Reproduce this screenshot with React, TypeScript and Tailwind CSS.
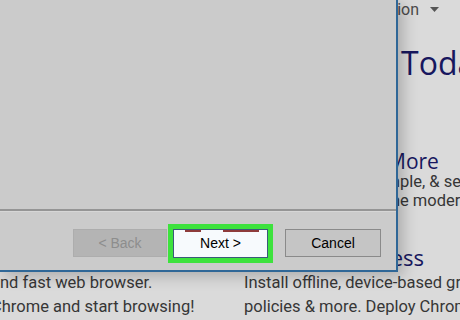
import React from "react";

export default function App() {
  const page = { fontFamily: "Roboto, 'Liberation Sans', sans-serif" };
  const head = { fontFamily: "'Open Sans', 'Liberation Sans', sans-serif" };
  const dlg = { fontFamily: "'Liberation Sans', Arial, sans-serif" };
  return (
    <div className="relative w-[460px] h-[320px] overflow-hidden bg-[#dadada]">
      {/* web page behind the dialog */}
      <div className="absolute inset-0 flex flex-col text-[#363636]" style={page}>
        <div className="flex items-center h-[20px] text-[16px] text-[#4a4a4a]">
          <div className="shrink-0 w-[419px] flex justify-end whitespace-nowrap">Documentation</div>
          <svg className="shrink-0 ml-[11px]" width="9" height="6" viewBox="0 0 9 6">
            <path d="M0 0 L9 0 L4.5 5 Z" fill="#555" />
          </svg>
        </div>
        <div
          className="mt-[27px] h-[32px] leading-[32px] text-[32px] text-[#17175e] pl-[401px] whitespace-nowrap"
          style={head}
        >
          Today
        </div>
        <div
          className="mt-[72px] h-[21px] leading-[21px] text-[21px] text-[#17175e] pl-[387px] whitespace-nowrap"
          style={head}
        >
          More
        </div>
        <div className="text-[16.5px] leading-[19px] whitespace-nowrap">
          <div className="flex">
            <div className="shrink-0 w-[400px] flex justify-end">Fast, sim</div>
            <div className="shrink-0">ple, &amp; secure</div>
          </div>
          <div className="flex">
            <div className="shrink-0 w-[400px] flex justify-end">for th</div>
            <div className="shrink-0">e modern enterprise</div>
          </div>
        </div>
        <div
          className="mt-[36px] h-[22px] leading-[22px] text-[22px] text-[#17175e] whitespace-nowrap flex"
          style={head}
        >
          <div className="shrink-0 w-[424px] flex justify-end">Access</div>
        </div>
        <div className="mt-[3px] flex text-[16.5px] leading-[24px] whitespace-nowrap">
          <div className="shrink-0 w-[244px] -ml-[9px]">
            <div>and fast web browser.</div>
            <div>Chrome and start browsing!</div>
          </div>
          <div className="shrink-0 ml-[9px]">
            <div>Install offline, device-based group</div>
            <div>policies &amp; more. Deploy Chrome</div>
          </div>
        </div>
      </div>

      {/* installer dialog */}
      <div
        className="absolute left-0 top-0 w-[398px] h-[272px] bg-[#cbcbcb] border-r-2 border-b-2 border-[#2f6797] shadow-[5px_4px_14px_rgba(0,0,0,0.22)] flex flex-col"
        style={dlg}
      >
        <div className="flex-1" />
        <div className="h-[2px] bg-[#959595]" />
        <div className="h-[1px] bg-[#d6d6d6]" />
        <div className="h-[58px] flex items-start pt-[17px] pl-[73px] text-[14px]">
          <div className="shrink-0 w-[94px] h-[28px] bg-[#b4b4b4] border border-[#adadad] flex items-center justify-center text-[#8d8d8d]">
            &lt; Back
          </div>
          <div className="relative shrink-0 ml-[6px] w-[95px] h-[29px] bg-[#f7fafd] border border-[#3a5a7a] outline-[5px] outline-solid outline-[#3de23d] flex items-center justify-center text-black">
            <div className="absolute top-0 left-[11px] w-[16px] h-[2px] bg-[#8e3b3b]" />
            <div className="absolute top-0 left-[49px] w-[36px] h-[2px] bg-[#8e3b3b]" />
            Next &gt;
          </div>
          <div className="shrink-0 ml-[17px] w-[96px] h-[28px] bg-[#c5c5c5] border border-[#8a8a8a] flex items-center justify-center text-black">
            Cancel
          </div>
        </div>
      </div>
    </div>
  );
}
